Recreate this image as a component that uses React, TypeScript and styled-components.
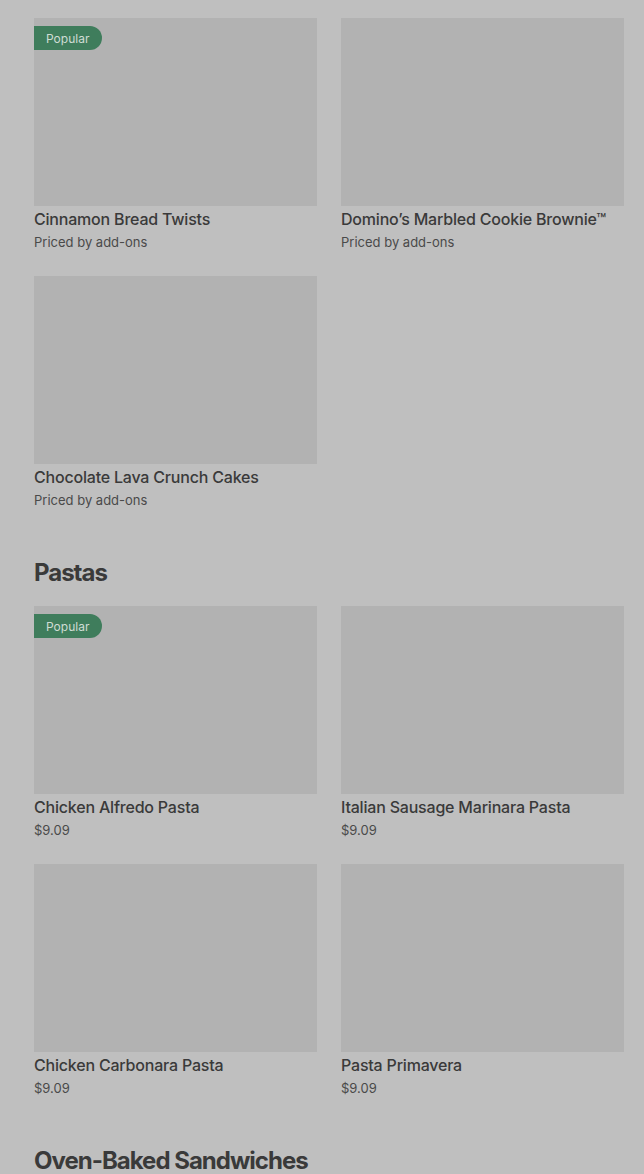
import React from 'react'
import styled, { createGlobalStyle } from 'styled-components'

const GlobalStyle = createGlobalStyle`
    html, body {
        margin: 0;
        padding: 0;
        background-color: #bfbfbf;
    }
    body {
        font-family: Inter, "Noto Sans", sans-serif;
        color: #3b3b3b;
    }
`

const Page = styled.div`
    padding: 18px 20px 0 34px;
    background-color: #bfbfbf;
    min-height: 1174px;
    box-sizing: border-box;
    overflow: hidden;
`
const Section = styled.section`
    display: flex;
    flex-direction: column;
`
const SectionTitle = styled.h2`
    margin: 47px 0 17px;
    font-size: 24px;
    line-height: 32px;
    font-weight: 700;
    letter-spacing: -1px;
    color: #3a3a3a;
`
const Grid = styled.div`
    display: grid;
    grid-template-columns: repeat(2, 283px);
    column-gap: 24px;
    row-gap: 24px;
`
const Card = styled.div`
    display: flex;
    flex-direction: column;
`
const Thumb = styled.div`
    position: relative;
    height: 188px;
    background-color: #b2b2b2;
`
const Badge = styled.span`
    position: absolute;
    top: 8px;
    left: 0;
    height: 24px;
    padding: 0 13px 0 12px;
    display: flex;
    align-items: center;
    border-radius: 0 12px 12px 0;
    background-color: #3f7d5c;
    color: #cfdcd4;
    font-size: 12px;
`
const ItemName = styled.div`
    margin-top: 3px;
    font-size: 16px;
    line-height: 20px;
    font-weight: 500;
    letter-spacing: -0.2px;
    color: #3a3a3a;
`
const ItemPrice = styled.div`
    margin-top: 3px;
    font-size: 13px;
    line-height: 20px;
    color: #4a4a4a;
`

type Item = {
    name: string
    price: string
    popular?: boolean
}

const sections: { title?: string, items: Item[] }[] = [
    {
        items: [
            { name: 'Cinnamon Bread Twists', price: 'Priced by add-ons', popular: true },
            { name: 'Domino\u2019s Marbled Cookie Brownie\u2122', price: 'Priced by add-ons' },
            { name: 'Chocolate Lava Crunch Cakes', price: 'Priced by add-ons' },
        ],
    },
    {
        title: 'Pastas',
        items: [
            { name: 'Chicken Alfredo Pasta', price: '$9.09', popular: true },
            { name: 'Italian Sausage Marinara Pasta', price: '$9.09' },
            { name: 'Chicken Carbonara Pasta', price: '$9.09' },
            { name: 'Pasta Primavera', price: '$9.09' },
        ],
    },
    {
        title: 'Oven-Baked Sandwiches',
        items: [],
    },
]

const App = () => {
    return (
        <>
            <GlobalStyle />
            <Page>
                {
                    sections.map((s, i) => (
                        <Section key={i}>
                            {s.title && <SectionTitle>{s.title}</SectionTitle>}
                            <Grid>
                                {
                                    s.items.map(item => (
                                        <Card key={item.name}>
                                            <Thumb>
                                                {item.popular && <Badge>{'Popular'}</Badge>}
                                            </Thumb>
                                            <ItemName>{item.name}</ItemName>
                                            <ItemPrice>{item.price}</ItemPrice>
                                        </Card>
                                    ))
                                }
                            </Grid>
                        </Section>
                    ))
                }
            </Page>
        </>
    )
}

export default App
